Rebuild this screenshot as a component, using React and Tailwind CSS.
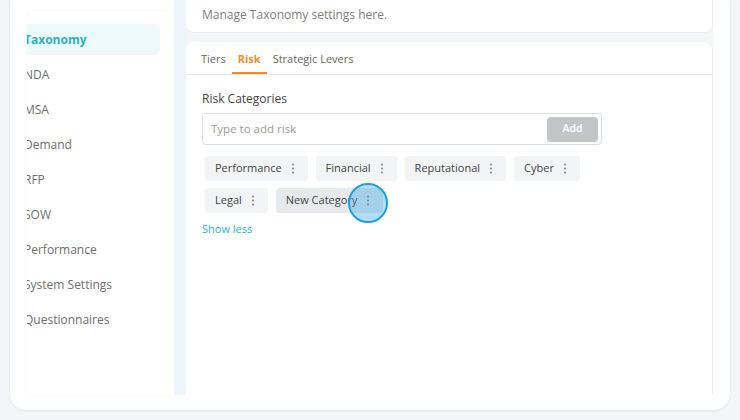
import React, { useState } from "react";

const menu = ["Taxonomy", "NDA", "MSA", "Demand", "RFP", "SOW", "Performance", "System Settings", "Questionnaires"];
const chips = ["Performance", "Financial", "Reputational", "Cyber", "Legal", "New Category"];

function Dots() {
    return (
        <svg width="4" height="11" viewBox="0 0 4 11" className="text-[#8a8f94]">
            <circle cx="2" cy="1.5" r="1.1" fill="currentColor" />
            <circle cx="2" cy="5.5" r="1.1" fill="currentColor" />
            <circle cx="2" cy="9.5" r="1.1" fill="currentColor" />
        </svg>
    );
}

export default function App() {
    const [risk, setRisk] = useState("");

    return (
        <div className="w-full h-screen bg-[#f4f5f7] px-[10px] pb-[10px] font-['Open_Sans',sans-serif]">
            <div className="h-[410px] bg-white rounded-b-[16px] shadow-[0_1px_3px_rgba(0,0,0,0.08)] flex pl-[17px] pr-[17px] pb-[15px]">
                {/* sidebar */}
                <div className="w-[147px] mt-[11px] bg-white rounded-tl-lg shadow-[0_0_3px_rgba(0,0,0,0.06)] overflow-hidden pt-[13px] flex flex-col gap-[4px]">
                    {menu.map((m, i) => (
                        <div
                            key={m}
                            className={
                                i === 0
                                    ? "-ml-[5px] w-[138px] h-[31px] flex items-center pl-[2px] rounded-md bg-[#ecfafc] text-[#2ab3c1] font-bold text-[12px]"
                                    : "-ml-[5px] w-[138px] h-[31px] flex items-center pl-[2px] text-[#6e6e6e] text-[12px]"
                            }
                        >
                            {m}
                        </div>
                    ))}
                </div>
                <div className="w-[12px] bg-[#eef4fb]" />
                {/* main */}
                <div className="flex-1 flex flex-col bg-[#f4f5f7]">
                    <div className="h-[33px] bg-white rounded-b-lg border-r border-b border-[#eceef0] flex items-center pl-[16px] pb-[2px] text-[12px] text-[#808080]">
                        Manage Taxonomy settings here.
                    </div>
                    <div className="mt-[9px] flex-1 bg-white rounded-t-lg border-r border-[#eceef0] flex flex-col">
                        <div className="h-[33px] border-b border-[#e4e6e8] flex items-end pl-[15px] gap-[12px] text-[11px]">
                            <div className="h-full flex items-center pt-[3px] text-[#666]">Tiers</div>
                            <div className="h-full flex items-center px-[6px] -mx-[6px] text-[#ee8f2a] font-bold border-b-2 border-[#ee8f2a] pt-[5px]">Risk</div>
                            <div className="h-full flex items-center pt-[3px] text-[#666]">Strategic Levers</div>
                        </div>
                        <div className="pl-[16px] pt-[15px]">
                            <div className="text-[12px] text-[#454545]">Risk Categories</div>
                            <div className="mt-[5px] w-[400px] h-[32px] border border-[#dcdfe2] rounded-[4px] flex items-center pl-[8px] pr-[3px]">
                                <input
                                    value={risk}
                                    onChange={(e) => setRisk(e.target.value)}
                                    placeholder="Type to add risk"
                                    className="flex-1 text-[11.5px] outline-none placeholder:text-[#9a9a9a] text-[#444]"
                                />
                                <button className="w-[51px] h-[25px] rounded-[4px] bg-[#c4c5c6] text-white text-[10.5px] font-semibold">
                                    Add
                                </button>
                            </div>
                            <div className="mt-[11px] w-[390px] flex flex-wrap gap-x-[8px] gap-y-[7px] pl-[3px]">
                                {chips.map((c) => (
                                    <div
                                        key={c}
                                        className={
                                            (c === "New Category" ? "bg-[#e6eaed] relative " : "bg-[#f3f4f5] ") +
                                            "h-[25px] rounded-[4px] flex items-center pl-[10px] pr-[13px] gap-[9px] text-[11px] text-[#444]"
                                        }
                                    >
                                        {c}
                                        <Dots />
                                        {c === "New Category" && (
                                            <div className="absolute left-[72px] top-[-5px] w-[40px] h-[40px] rounded-full bg-[rgba(40,160,225,0.35)] border-2 border-[#1e9fe2]" />
                                        )}
                                    </div>
                                ))}
                            </div>
                            <div className="mt-[8px] text-[11px] text-[#2ab3c1]">Show less</div>
                        </div>
                    </div>
                </div>
            </div>
        </div>
    );
}
